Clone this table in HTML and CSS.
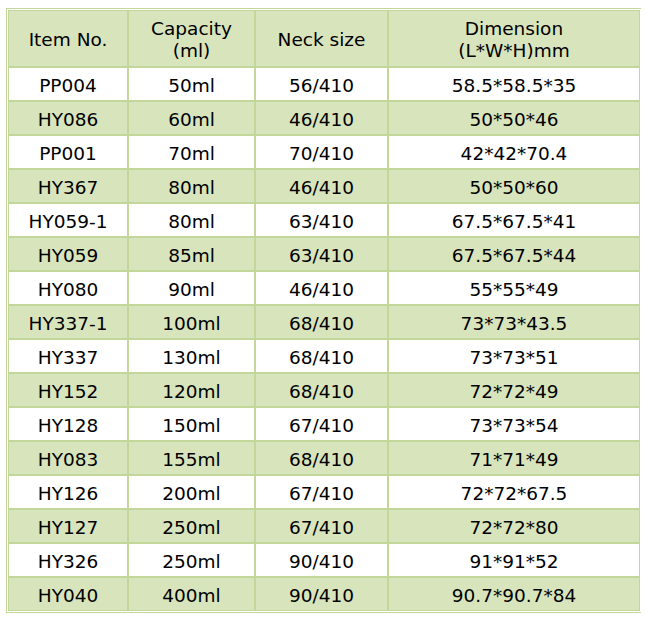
FILE: index.html
```html
<!DOCTYPE html>
<html>
<head>
<meta charset="utf-8">
<link rel="stylesheet" href="styles.css">
</head>
<body>
<table class="spec">
  <colgroup>
    <col class="c1"><col class="c2"><col class="c3"><col class="c4">
  </colgroup>
  <thead>
    <tr class="head">
      <th>Item No.</th>
      <th>Capacity<br>(ml)</th>
      <th>Neck size</th>
      <th>Dimension<br>(L*W*H)mm</th>
    </tr>
  </thead>
  <tbody>
    <tr><td>PP004</td><td>50ml</td><td>56/410</td><td>58.5*58.5*35</td></tr>
    <tr><td>HY086</td><td>60ml</td><td>46/410</td><td>50*50*46</td></tr>
    <tr><td>PP001</td><td>70ml</td><td>70/410</td><td>42*42*70.4</td></tr>
    <tr><td>HY367</td><td>80ml</td><td>46/410</td><td>50*50*60</td></tr>
    <tr><td>HY059-1</td><td>80ml</td><td>63/410</td><td>67.5*67.5*41</td></tr>
    <tr><td>HY059</td><td>85ml</td><td>63/410</td><td>67.5*67.5*44</td></tr>
    <tr><td>HY080</td><td>90ml</td><td>46/410</td><td>55*55*49</td></tr>
    <tr><td>HY337-1</td><td>100ml</td><td>68/410</td><td>73*73*43.5</td></tr>
    <tr><td>HY337</td><td>130ml</td><td>68/410</td><td>73*73*51</td></tr>
    <tr><td>HY152</td><td>120ml</td><td>68/410</td><td>72*72*49</td></tr>
    <tr><td>HY128</td><td>150ml</td><td>67/410</td><td>73*73*54</td></tr>
    <tr><td>HY083</td><td>155ml</td><td>68/410</td><td>71*71*49</td></tr>
    <tr><td>HY126</td><td>200ml</td><td>67/410</td><td>72*72*67.5</td></tr>
    <tr><td>HY127</td><td>250ml</td><td>67/410</td><td>72*72*80</td></tr>
    <tr><td>HY326</td><td>250ml</td><td>90/410</td><td>91*91*52</td></tr>
    <tr><td>HY040</td><td>400ml</td><td>90/410</td><td>90.7*90.7*84</td></tr>
  </tbody>
</table>
</body>
</html>
```

FILE: styles.css
```css
html, body {
  background: #ffffff;
}
body {
  margin: 8px 6px;
  font-family: "DejaVu Sans", Verdana, sans-serif;
  font-size: 18.5px;
  color: #000;
}
.spec {
  border-collapse: separate;
  border-spacing: 0;
  border: 1px solid #c4d79b;
  padding: 1px;
  table-layout: fixed;
  width: 636px;
}
.c1 { width: 120px; }
.c2 { width: 127px; }
.c3 { width: 133px; }
.c4 { width: 252px; }
.spec th,
.spec td {
  border: 1px solid #c4d79b;
  text-align: center;
  vertical-align: middle;
  font-weight: normal;
  box-sizing: border-box;
}
.spec th {
  height: 57px;
  padding: 2px 0 0;
  line-height: 22px;
  background: #d8e4bc;
}
.spec td {
  height: 34px;
  padding: 4px 0 0;
  line-height: 22px;
}
.spec tbody tr:nth-child(even) td {
  background: #d8e4bc;
}
```
